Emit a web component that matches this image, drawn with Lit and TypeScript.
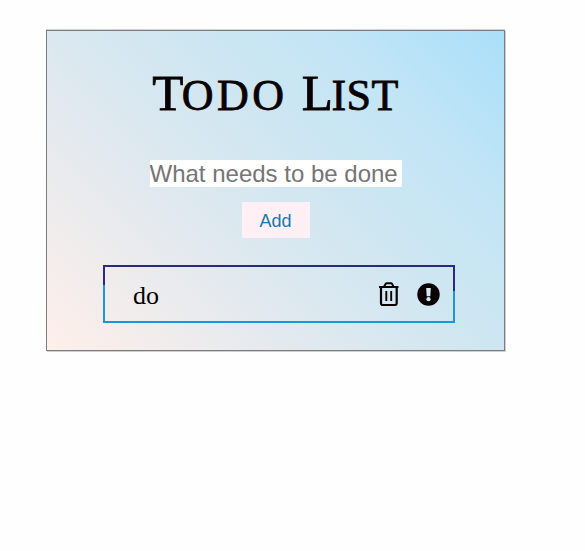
import { LitElement, html, css } from "lit";
import { customElement, state } from "lit/decorators.js";

@customElement("app-root")
export class AppRoot extends LitElement {
  @state() private items: string[] = ["do"];

  static styles = css`
    :host {
      min-height: 551px;
      background: #fefefe;
      display: flow-root;
    }
    .card {
      box-sizing: border-box;
      width: 459px;
      height: 321px;
      margin: 30px 0 0 46px;
      border: 1px solid #7b7d7f;
      box-shadow: 1px 1px 0 #cfcfcf, 0 -1px 0 #d4d4d4;
      background: linear-gradient(45deg, #ffefea 0%, #e6eaee 28%, #dae8f0 42%, #cde6f2 60%, #c3e5f5 76%, #aadff9 100%);
      display: flex;
      flex-direction: column;
      align-items: center;
    }
    .title {
      margin: 32px 0 1px;
      height: 60px;
      font: 400 44px/60px "Liberation Serif", serif;
      color: #0a0204;
      -webkit-text-stroke: 0.8px #0a0204;
      white-space: nowrap;
      letter-spacing: 3.4px;
      text-transform: uppercase;
    }
    .cap {
      font-size: 51px;
      letter-spacing: -1.5px;
    }
    .tail {
      letter-spacing: 0.5px;
    }
    .field {
      box-sizing: border-box;
      width: 252px;
      height: 27px;
      margin: 36px 0 0;
      padding: 0;
      border: 0;
      border-radius: 0;
      background: #fff;
      font: 24px "Liberation Sans", Arial, sans-serif;
      color: #333;
    }
    .field::placeholder {
      color: #757575;
      opacity: 1;
    }
    .add {
      width: 68px;
      height: 36px;
      margin: 15px 0 0;
      padding: 2px 0 0;
      border: 0;
      border-radius: 0;
      background: #fff0f5;
      color: #1479b0;
      font: 18px "Liberation Sans", Arial, sans-serif;
    }
    .list {
      margin: 27px 0 0 7px;
      padding: 0;
      list-style: none;
    }
    .item {
      box-sizing: border-box;
      width: 352px;
      height: 58px;
      border: 2px solid;
      border-image: linear-gradient(181deg, #2a2a80 0 41%, #1b97d8 41% 100%) 2;
      display: flex;
      align-items: center;
      padding: 0 13px 0 28px;
      font: 26px "Liberation Serif", serif;
      color: #000;
    }
    .label {
      flex: 1;
      padding-top: 3px;
    }
    .icon {
      display: block;
    }
    .trash {
      margin-right: 17px;
    }
  `;

  render() {
    return html`
      <main class="card">
        <h1 class="title"><span class="cap">T</span>odo <span class="cap">L</span><span class="tail">ist</span></h1>
        <input class="field" placeholder="What needs to be done" />
        <button class="add">Add</button>
        <ul class="list">
          ${this.items.map(
            (item) => html`<li class="item">
              <span class="label">${item}</span>
              <svg class="icon trash" width="22" height="24" viewBox="0 0 22 24" fill="none" stroke="#0a0204" stroke-width="2">
                <path d="M1 5H20.5M6 5L7.5 2.1Q8 1.3 8.8 1.3H13Q13.8 1.3 14.2 2.1L15.6 5" />
                <path d="M3 5.5V21.3Q3 23 4.7 23H17Q18.7 23 18.7 21.3V5.5" stroke-width="2.2" />
                <path d="M8.3 9V19M13.2 9V19" stroke-width="1.9" />
              </svg>
              <svg class="icon" width="23" height="24" viewBox="0 0 23 24">
                <circle cx="11.5" cy="12.5" r="11.2" fill="#0a0204" />
                <path d="M9.2 6H13.8L13.3 14.2H9.7Z" fill="#d8e8f0" />
                <circle cx="11.5" cy="17.2" r="2.1" fill="#d8e8f0" />
              </svg>
            </li>`
          )}
        </ul>
      </main>
    `;
  }
}
